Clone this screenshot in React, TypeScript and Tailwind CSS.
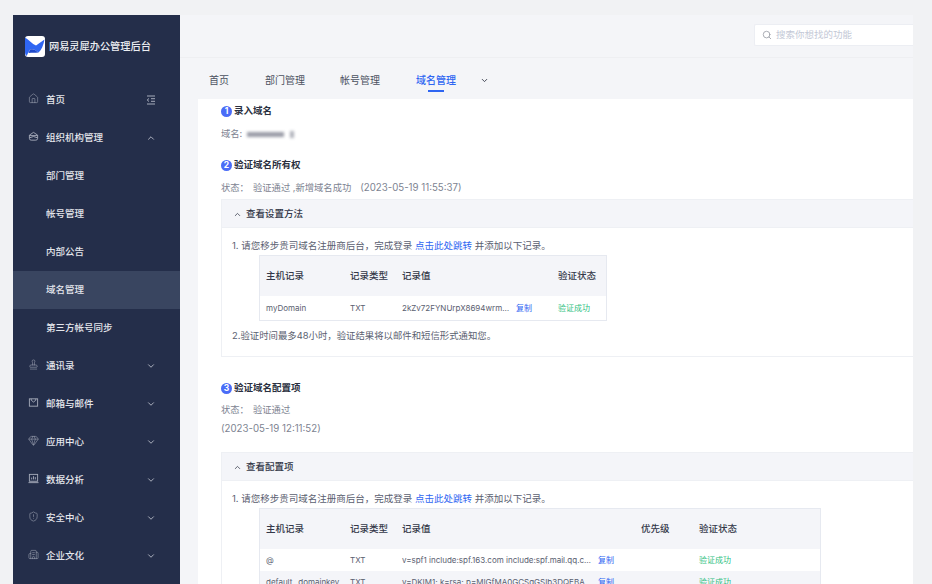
import { ChevronDown, ChevronUp, House, Stamp, Gem, ShieldAlert, Building2, Search } from 'lucide-react';

const FONT = "font-['Inter','Noto_Sans_CJK_SC',sans-serif]";

function OrgIcon() {
  return (
    <svg width="11" height="11" viewBox="0 0 12 12" fill="none" stroke="currentColor" strokeWidth="1">
      <path d="M1.5 4.5 6 1.5l4.5 3v3.5a2 2 0 0 1-2 2h-5a2 2 0 0 1-2-2z" />
      <path d="M1.5 5h9M1.5 7.5 6 6l4.5 1.5" />
    </svg>
  );
}

function MailIcon() {
  return (
    <svg width="11" height="11" viewBox="0 0 12 12" fill="none" stroke="currentColor" strokeWidth="1">
      <rect x="1.5" y="2" width="9" height="8" />
      <path d="M3.5 2v1.5L6 5.5l2.5-2V2" />
    </svg>
  );
}

function ChartIcon() {
  return (
    <svg width="11" height="11" viewBox="0 0 12 12" fill="none" stroke="currentColor" strokeWidth="1">
      <rect x="1.5" y="1.5" width="9" height="7.5" />
      <path d="M0.5 10.5h11M4 7V5M6 7V3.5M8 7V4.5" />
    </svg>
  );
}

function CollapseIcon() {
  return (
    <svg width="10" height="10" viewBox="0 0 10 10" fill="none" stroke="currentColor" strokeWidth="0.9">
      <path d="M1 1h8M5 3.7h4M5 6.3h4M1 9h8M3 3.5 1.2 5 3 6.5" />
    </svg>
  );
}

function Logo() {
  return (
    <div className="flex h-[21px] w-[20px] items-center justify-center overflow-hidden rounded-[3px] bg-white">
      <svg width="20" height="21" viewBox="0 0 20 21">
        <path d="M0 1.5 C4 3.5 7 8 11 9.5 L19.5 3.5 C18.5 9 16.5 14 13.5 16.5 C10 13.5 8 12.5 5 13.5 L1.5 20 C0.5 19 0 18 0 16 Z" fill="#2f66f2" />
        <path d="M5 13.5 C8 12.5 10 13.5 13.5 16.5 C10 17 7 16.5 3.5 17 Z" fill="#1f49c9" />
      </svg>
    </div>
  );
}

const MENU = [
  { label: '首页', icon: <House size={11} strokeWidth={1.2} />, right: 'collapse' },
  { label: '组织机构管理', icon: <OrgIcon />, right: 'up' },
  { label: '部门管理' },
  { label: '帐号管理' },
  { label: '内部公告' },
  { label: '域名管理', active: true },
  { label: '第三方帐号同步' },
  { label: '通讯录', icon: <Stamp size={11} strokeWidth={1.2} />, right: 'down' },
  { label: '邮箱与邮件', icon: <MailIcon />, right: 'down' },
  { label: '应用中心', icon: <Gem size={11} strokeWidth={1.2} />, right: 'down' },
  { label: '数据分析', icon: <ChartIcon />, right: 'down' },
  { label: '安全中心', icon: <ShieldAlert size={11} strokeWidth={1.2} />, right: 'down' },
  { label: '企业文化', icon: <Building2 size={11} strokeWidth={1.2} />, right: 'down' },
];

function Sidebar() {
  return (
    <aside className="flex w-[167px] shrink-0 flex-col bg-[#242e4a]">
      <div className="flex h-[66px] shrink-0 items-center gap-[4px] pb-[3px] pl-[12px]">
        <Logo />
        <span className="text-[10.2px] font-medium leading-none text-[#eceef3]">网易灵犀办公管理后台</span>
      </div>
      {MENU.map((m) => (
        <div
          key={m.label}
          className={`flex h-[38px] shrink-0 items-center pl-[33px] pr-[24px] text-[9.5px] font-medium text-[#e4e6ec] ${m.active ? 'bg-[#394560]' : ''}`}
        >
          <span className="relative flex-1 pt-px">
            {m.icon && (
              <span className="absolute left-[-18px] top-[1px] text-[#a5abba]">{m.icon}</span>
            )}
            {m.label}
          </span>
          {m.right === 'collapse' && <span className="text-[#b5bac7]"><CollapseIcon /></span>}
          {m.right === 'up' && <ChevronUp size={10} className="text-[#c5c9d4]" />}
          {m.right === 'down' && <ChevronDown size={10} className="text-[#c5c9d4]" />}
        </div>
      ))}
    </aside>
  );
}

function Tabs() {
  const items = ['首页', '部门管理', '帐号管理'];
  return (
    <div className="flex h-[41px] shrink-0 items-start pl-[29px] pt-[15px] text-[10px] leading-[14px] text-[#4b5160]">
      <span className="w-[56px]">{items[0]}</span>
      <span className="w-[75px]">{items[1]}</span>
      <span className="w-[76px]">{items[2]}</span>
      <span className="relative font-medium text-[#2f66f2]">
        域名管理
        <span className="absolute left-[12px] top-[17px] h-[2px] w-[16px] bg-[#2f66f2]" />
      </span>
      <ChevronDown size={9} className="ml-[24px] mt-[3px] text-[#3c4150]" strokeWidth={2.5} />
    </div>
  );
}

function StepTitle({ n, title }: { n: number; title: string }) {
  return (
    <div className="flex h-[14px] items-center gap-[2px]">
      <span className="flex h-[11px] w-[11px] items-center justify-center rounded-full bg-[#4a6cf7] text-[8.5px] font-bold leading-none text-white">
        {n}
      </span>
      <span className="text-[9.5px] font-semibold text-[#2b3040]">{title}</span>
    </div>
  );
}

function PanelHeader({ title }: { title: string }) {
  return (
    <div className="flex h-[28px] items-center gap-[4px] border-b border-[#eef0f4] bg-[#f4f5f9] pl-[11px] pt-px text-[9.5px] font-medium text-[#333848]">
      <ChevronUp size={9} strokeWidth={2} />
      {title}
    </div>
  );
}

function Instruction() {
  return (
    <div className="flex h-[14px] items-center pl-[10px] text-[9.5px] text-[#5a6070]">
      1. 请您移步贵司域名注册商后台，完成登录&nbsp;
      <span className="text-[#2f66f2]">点击此处跳转</span>
      &nbsp;并添加以下记录。
    </div>
  );
}

const Copy = () => <span className="text-[#2f66f2]">复制</span>;
const Ok = () => <span className="text-[#2fbf7f]">验证成功</span>;

function VerifyTable() {
  return (
    <div className="ml-[37px] mt-[2px] w-[348px] border border-[#e6e9f0] text-[8px] text-[#5a6070]">
      <div className="grid h-[40px] grid-cols-[84px_52px_156px_1fr] items-center bg-[#f4f5f9] pl-[6px] text-[9.5px] font-medium text-[#333848]">
        <span>主机记录</span>
        <span>记录类型</span>
        <span>记录值</span>
        <span>验证状态</span>
      </div>
      <div className="grid h-[24px] grid-cols-[84px_52px_114px_42px_1fr] items-center pl-[6px]">
        <span>myDomain</span>
        <span>TXT</span>
        <span className="whitespace-nowrap">2kZv72FYNUrpX8694wrm…</span>
        <Copy />
        <Ok />
      </div>
    </div>
  );
}

function ConfigTable() {
  const rows = [
    { host: '@', value: 'v=spf1 include:spf.163.com include:spf.mail.qq.c…', bg: '' },
    { host: 'default._domainkey', value: 'v=DKIM1; k=rsa; p=MIGfMA0GCSqGSIb3DQEBA…', bg: 'bg-[#f4f5f9]' },
  ];
  return (
    <div className="ml-[37px] mt-[2px] w-[562px] border border-[#e6e9f0] text-[8px] text-[#5a6070]">
      <div className="grid h-[40px] grid-cols-[84px_52px_239px_58px_1fr] items-center bg-[#f4f5f9] pl-[6px] text-[9.5px] font-medium text-[#333848]">
        <span>主机记录</span>
        <span>记录类型</span>
        <span>记录值</span>
        <span>优先级</span>
        <span>验证状态</span>
      </div>
      {rows.map((r) => (
        <div key={r.host} className={`grid h-[22px] grid-cols-[84px_52px_196px_43px_58px_1fr] items-center pl-[6px] ${r.bg}`}>
          <span className="whitespace-nowrap">{r.host}</span>
          <span>TXT</span>
          <span className="whitespace-nowrap">{r.value}</span>
          <Copy />
          <span />
          <Ok />
        </div>
      ))}
    </div>
  );
}

export default function App() {
  return (
    <div className={`${FONT} h-[584px] w-[932px] overflow-hidden bg-[#f1f2f4] pl-[13px] pr-[19px] pt-[15px]`}>
      <div className="flex h-[569px]">
        <Sidebar />
        <main className="flex min-w-0 flex-1 flex-col bg-[#f4f5f8]">
          <header className="flex h-[43px] shrink-0 items-start justify-end border-b border-[#eeeff2] pt-[9px]">
            <div className="flex h-[22px] w-[159px] items-center gap-[4px] rounded-l-[2px] border border-r-0 border-[#eceef3] bg-white pl-[7px] text-[9.5px] text-[#c3c8d6]">
              <Search size={10} className="text-[#9a9da6]" />
              搜索你想找的功能
            </div>
          </header>
          <Tabs />
          <div className="ml-[18px] flex-1 overflow-hidden bg-white pl-[23px]">
            <div className="pt-[5px]"><StepTitle n={1} title="录入域名" /></div>
            <div className="mt-[9px] flex h-[14px] items-center gap-[5px] text-[9.3px] text-[#7d8391]">
              域名:
              <span className="flex items-center gap-[6px] blur-[1.5px]">
                <span className="h-[5px] w-[37px] bg-[#9b9da8]" />
                <span className="h-[7px] w-[4px] bg-[#b0b2bb]" />
              </span>
            </div>
            <div className="mt-[17px]"><StepTitle n={2} title="验证域名所有权" /></div>
            <div className="mt-[9px] flex h-[14px] items-center text-[9.3px] text-[#7d8391]">
              <span className="w-[32px]">状态：</span>
              验证通过 ,新增域名成功
              <span className="ml-[9px] text-[9.7px]">(2023-05-19 11:55:37)</span>
            </div>
            <section className="mt-[4px] h-[158px] border border-r-0 border-[#eef0f4]">
              <PanelHeader title="查看设置方法" />
              <div className="pt-[11px]">
                <Instruction />
                <VerifyTable />
                <div className="mt-[8px] flex h-[14px] items-center pl-[10px] text-[9.4px] text-[#5a6070]">
                  2.验证时间最多48小时，验证结果将以邮件和短信形式通知您。
                </div>
              </div>
            </section>
            <div className="mt-[24px]"><StepTitle n={3} title="验证域名配置项" /></div>
            <div className="mt-[8px] flex h-[14px] items-center text-[9.3px] text-[#7d8391]">
              <span className="w-[32px]">状态：</span>
              验证通过
            </div>
            <div className="mt-[5px] flex h-[14px] items-center text-[9.7px] text-[#7d8391]">(2023-05-19 12:11:52)</div>
            <section className="mt-[16px] border border-r-0 border-[#eef0f4]">
              <PanelHeader title="查看配置项" />
              <div className="pt-[11px]">
                <Instruction />
                <ConfigTable />
              </div>
            </section>
          </div>
        </main>
      </div>
    </div>
  );
}
